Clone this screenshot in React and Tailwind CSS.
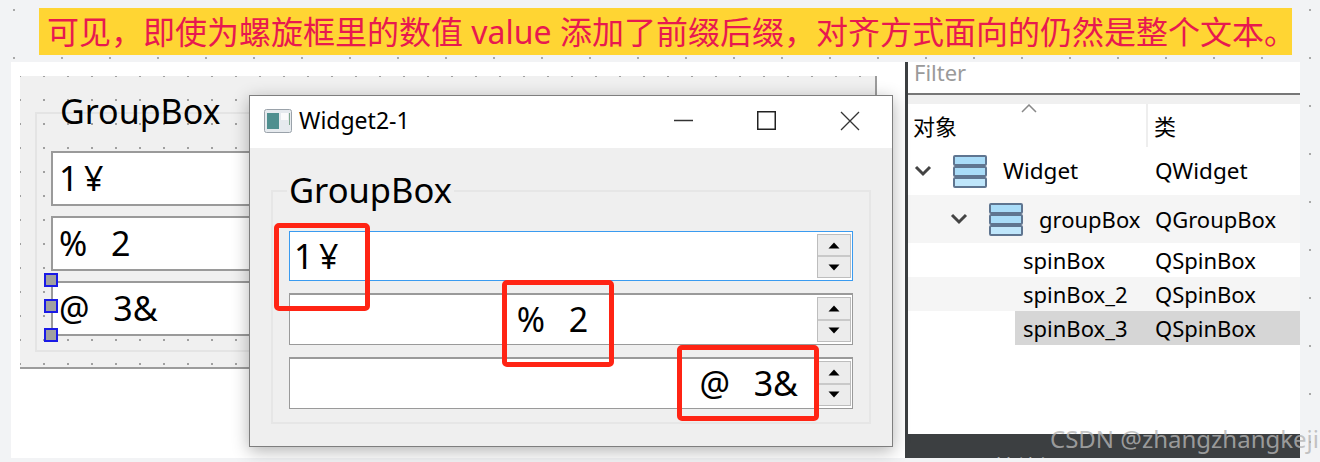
const UI_FONT = "font-['Noto_Sans','Noto_Sans_CJK_SC',sans-serif]";

const SpinButtons = () => (
    <div className="w-[34px] flex flex-col border border-[#bdbdbd] bg-[#ececec] shrink-0">
        <div className="flex-1 flex items-center justify-center border-b-2 border-[#c9c9c9]">
            <svg width="12" height="7" viewBox="0 0 12 7"><path d="M0.5 6.5 L6 0.5 L11.5 6.5 Z" fill="#000" /></svg>
        </div>
        <div className="flex-1 flex items-center justify-center">
            <svg width="12" height="7" viewBox="0 0 12 7"><path d="M0.5 0.5 L6 6.5 L11.5 0.5 Z" fill="#000" /></svg>
        </div>
    </div>
);

const WindowSpin = ({ text, justify, pad, focused, h }) => (
    <div className={`flex items-stretch bg-white border ${focused ? "border-[#3a9bf0]" : "border-[#9a9a9a] border-t-2"} ${h} pr-[1px] py-[2px]`}>
        <div className={`flex-1 flex items-center ${justify} ${pad} text-[34px] text-black whitespace-pre [word-spacing:3px]`}>{text}</div>
        <SpinButtons />
    </div>
);

const DesignerSpin = ({ text }) => (
    <div className="h-[55px] flex items-center pl-[6px] bg-white border-2 border-[#9a9a9a] border-r-0 text-[34px] text-black whitespace-pre [word-spacing:3px]">
        {text}
    </div>
);

const Handle = ({ className }) => (
    <div className={`absolute left-[44px] w-[14px] h-[14px] bg-[#a0a0a0] border-2 border-[#1a1ae6] ${className}`} />
);

const StackIcon = () => (
    <svg width="34" height="33" viewBox="0 0 34 33" className="shrink-0">
        <rect x="1" y="1" width="32" height="9" rx="1" fill="#a9dcf8" stroke="#5f7590" strokeWidth="2" />
        <rect x="1" y="12" width="32" height="9" rx="1" fill="#a9dcf8" stroke="#5f7590" strokeWidth="2" />
        <rect x="1" y="23" width="32" height="9" rx="1" fill="#bfe6fb" stroke="#5f7590" strokeWidth="2" />
    </svg>
);

const Chevron = () => (
    <svg width="18" height="12" viewBox="0 0 18 12" className="shrink-0">
        <path d="M2 2 L9 9 L16 2" fill="none" stroke="#444" strokeWidth="3" />
    </svg>
);

const ObjectRow = ({ name, type, striped, selected }) => (
    <div className={`h-[34px] flex items-center text-[22px] text-black ${striped ? "bg-[#f5f5f5]" : "bg-white"}`}>
        <div className={`h-full ml-[107px] pl-[8px] w-[132px] flex items-center ${selected ? "bg-[#d6d6d6]" : ""}`}>{name}</div>
        <div className={`h-full flex-1 flex items-center pl-[8px] ${selected ? "bg-[#d6d6d6]" : ""}`}>{type}</div>
    </div>
);

const Highlight = ({ className }) => (
    <div className={`absolute border-[5px] border-[#ff2414] rounded-[5px] ${className}`} />
);

export default function App() {
    return (
        <div className={`relative w-[1320px] h-[462px] overflow-hidden bg-[#f2f3f5] bg-[radial-gradient(#a9a9a9_1.2px,transparent_1.3px)] bg-[size:48px_48px] bg-[position:-10px_-14px] ${UI_FONT}`}>
            {/* Banner */}
            <div className="ml-[39px] mt-[8px] w-[1253px] h-[47px] bg-[#ffd533] flex items-center pl-[8px] text-[32px] leading-none text-[#e8194f] whitespace-pre">
                可见，即使为螺旋框里的数值 value 添加了前缀后缀，对齐方式面向的仍然是整个文本。
            </div>

            <div className="mt-[7px] flex h-[396px]">
                {/* Designer side */}
                <div className="ml-[11px] w-[894px] bg-white pt-[14px] pl-[9px]">
                    <div className="relative w-[857px] h-[293px] bg-[#f0f0f0] bg-[radial-gradient(#a0a0a0_1.1px,transparent_1.2px)] bg-[size:24px_24px] bg-[position:-12px_-12px] border-r-2 border-b-2 border-[#9c9c9c] pt-[36px] pl-[15px] pr-[15px]">
                        <div className="relative border-2 border-[#e4e4e4] h-[240px] pt-[37px] pl-[14px]">
                            <span className="absolute left-[21px] -top-[25px] px-[2px] text-[34px] leading-[44px] text-black">GroupBox</span>
                            <div className="flex flex-col gap-[10px]">
                                <DesignerSpin text={"1\u2009¥"} />
                                <DesignerSpin text="%  2" />
                                <DesignerSpin text="@  3&" />
                            </div>
                        </div>
                    </div>
                </div>

                {/* Object inspector */}
                <div className="w-[395px] bg-white border-l-[3px] border-[#3c3f41] flex flex-col text-black">
                    <div className="h-[33px] pl-[6px] pb-[11px] flex items-center text-[22px] text-[#9a9a9a] border-b-2 border-[#777]">Filter</div>
                    <div className="h-[9px] bg-[#f0f0f0]" />
                    <div className="relative h-[43px] flex items-center text-[22px]">
                        <svg width="16" height="9" viewBox="0 0 16 9" className="absolute left-[113px] top-[0px]">
                            <path d="M1 8 L8 1 L15 8" fill="none" stroke="#888" strokeWidth="1.5" />
                        </svg>
                        <div className="w-[240px] h-full pl-[5px] pt-[2px] flex items-center border-r-2 border-[#eeeeee]">对象</div>
                        <div className="pl-[6px] pt-[2px]">类</div>
                    </div>
                    <div className="h-[48px] flex items-center text-[22px] bg-white">
                        <div className="w-[247px] flex items-center pl-[6px]">
                            <Chevron />
                            <div className="ml-[21px]"><StackIcon /></div>
                            <span className="ml-[16px] text-[22.5px]">Widget</span>
                        </div>
                        <span className="text-[22.5px]">QWidget</span>
                    </div>
                    <div className="h-[48px] flex items-center text-[22px] bg-[#f5f5f5]">
                        <div className="w-[247px] flex items-center pl-[42px]">
                            <Chevron />
                            <div className="ml-[21px]"><StackIcon /></div>
                            <span className="ml-[16px]">groupBox</span>
                        </div>
                        <span>QGroupBox</span>
                    </div>
                    <ObjectRow name="spinBox" type="QSpinBox" />
                    <ObjectRow name="spinBox_2" type="QSpinBox" striped />
                    <ObjectRow name="spinBox_3" type="QSpinBox" selected />
                    <div className="flex-1 bg-white" />
                    <div className="h-[24px] bg-[#3c3f41] overflow-hidden pl-[64px] text-[22px] leading-[66px] text-white">属性编辑器</div>
                </div>
            </div>

            {/* Selection handles on the designer form */}
            <Handle className="top-[273px]" />
            <Handle className="top-[299px]" />
            <Handle className="top-[328px]" />

            {/* Running window */}
            <div className="absolute left-[249px] top-[95px] w-[644px] h-[352px] border border-[#7e7e7e] bg-[#efefef] shadow-[0_4px_16px_rgba(0,0,0,0.3)] flex flex-col">
                <div className="h-[52px] bg-white flex items-center pl-[14px] pb-[3px] text-[23px] text-black">
                    <svg width="28" height="24" viewBox="0 0 28 24" className="shrink-0">
                        <rect x="0.5" y="0.5" width="27" height="23" rx="2" fill="#e6eaee" stroke="#9aa2aa" />
                        <rect x="3" y="4" width="12" height="16" fill="#4f8f8f" />
                        <rect x="17" y="4" width="7" height="7" fill="#fbfbfb" />
                        <rect x="25" y="4" width="1" height="12" fill="#7fa78f" />
                    </svg>
                    <span className="ml-[7px]">Widget2-1</span>
                    <div className="ml-auto flex items-center mr-[32px] gap-[64px]">
                        <svg width="19" height="19" viewBox="0 0 19 19"><path d="M0 9.5 H19" stroke="#333" strokeWidth="1.5" /></svg>
                        <svg width="19" height="19" viewBox="0 0 19 19"><rect x="0.75" y="0.75" width="17.5" height="17.5" fill="none" stroke="#222" strokeWidth="1.5" /></svg>
                        <svg width="20" height="20" viewBox="0 0 20 20"><path d="M1 1 L19 19 M19 1 L1 19" stroke="#333" strokeWidth="1.3" /></svg>
                    </div>
                </div>
                <div className="relative mt-[42px] ml-[21px] w-[600px] h-[234px] border-2 border-[#e6e6e6] pt-[39px] pl-[16px] pr-[16px] flex flex-col gap-[12px]">
                    <span className="absolute left-[14px] -top-[24px] px-[2px] bg-[#efefef] text-[34.5px] leading-[44px] text-black">GroupBox</span>
                    <WindowSpin text={"1\u2009¥"} justify="justify-start" pad="pl-[4px]" focused h="h-[50px]" />
                    <WindowSpin text="%  2" justify="justify-center" pad="pr-[2px]" h="h-[52px]" />
                    <WindowSpin text="@  3&" justify="justify-end" pad="pr-[19px]" h="h-[52px]" />
                </div>
            </div>

            <Highlight className="left-[274px] top-[223px] w-[96px] h-[88px]" />
            <Highlight className="left-[502px] top-[280px] w-[112px] h-[87px]" />
            <Highlight className="left-[677px] top-[345px] w-[142px] h-[76px]" />

            {/* Watermark */}
            <span className="absolute left-[1050px] top-[422px] text-[24px] leading-[34px] text-[#b4b4b4]/80 whitespace-nowrap">CSDN @zhangzhangkeji</span>
        </div>
    );
}
